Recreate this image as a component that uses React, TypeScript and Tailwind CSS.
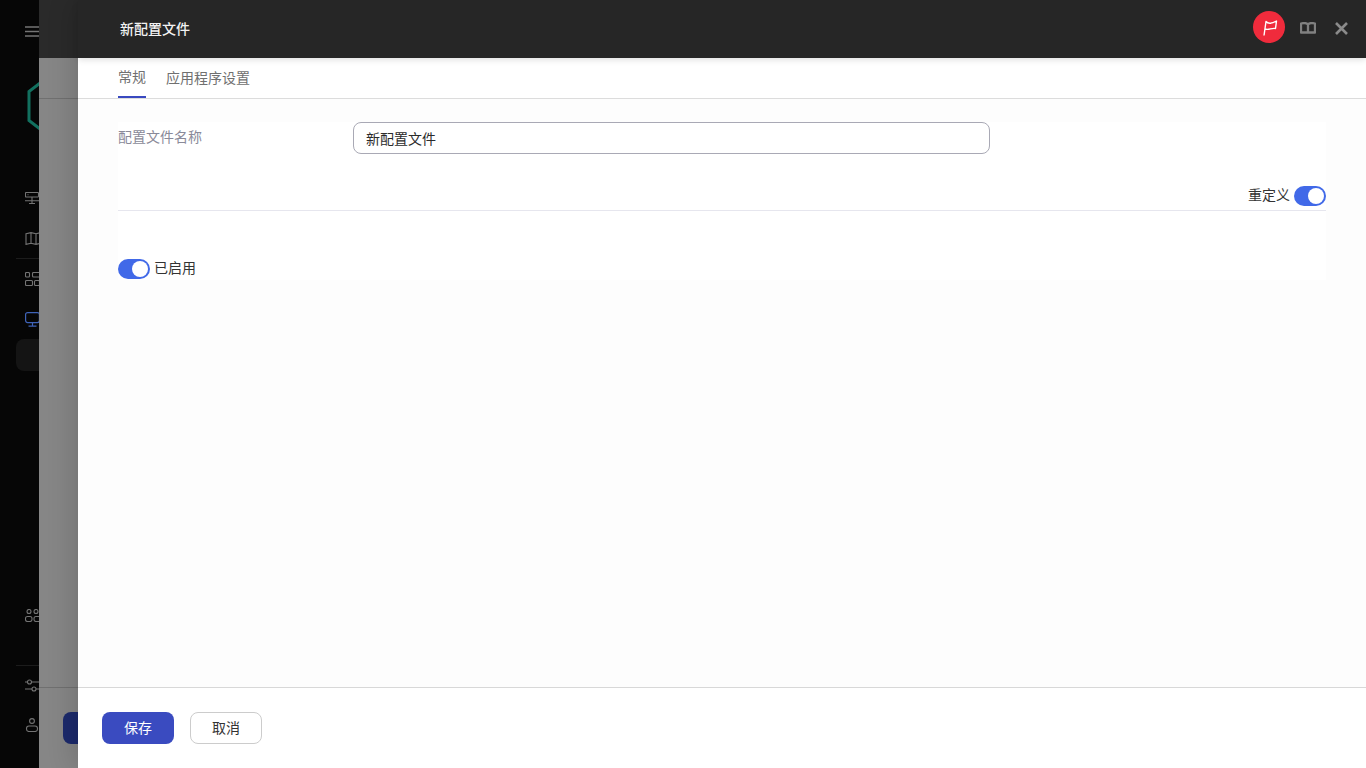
function Toggle() {
  return (
    <span className="flex h-5 w-8 shrink-0 items-center justify-end rounded-full bg-[#4169e8] pr-0.5">
      <span className="h-4 w-4 rounded-full bg-white" />
    </span>
  );
}

function Sidebar() {
  return (
    <div className="flex h-full w-[200px] flex-col bg-[#060606] pl-[25px] text-[#747474]">
      <svg width="18" height="16" viewBox="0 0 18 16" fill="none" stroke="currentColor" strokeWidth="1.3" className="mt-[24px] shrink-0">
        <path d="M0 3H18M0 7.5H18M0 12H18" />
      </svg>
      <svg width="30" height="54" viewBox="0 0 30 54" fill="none" stroke="#12705f" strokeWidth="3" className="mt-[40px] shrink-0">
        <path d="M19 0 L4 11.5 V40.5 L19 52" />
      </svg>
      <svg width="16" height="12" viewBox="0 0 16 12" fill="none" stroke="currentColor" strokeWidth="1.1" className="mt-[58px] shrink-0">
        <rect x="0.5" y="0.5" width="13" height="4.5" rx="0.8" />
        <path d="M2.5 2.7H3.5M7 5V11.5M0 8.8H15M4 11.5H10" />
      </svg>
      <svg width="16" height="13" viewBox="0 0 16 13" fill="none" stroke="currentColor" strokeWidth="1.1" className="mt-[28px] shrink-0">
        <path d="M1 1.8 L6 0.6 L11 1.8 L15.5 0.6 V11.2 L11 12.4 L6 11.2 L1 12.4 Z M6 0.6 V11.2 M11 1.8 V12.4" />
      </svg>
      <div className="-ml-[9px] mt-[13px] h-px w-[160px] shrink-0 bg-[#1c1c1c]" />
      <svg width="16" height="14" viewBox="0 0 16 14" fill="none" stroke="currentColor" strokeWidth="1.1" className="mt-[13px] shrink-0">
        <rect x="0.5" y="0.5" width="4" height="4.5" rx="1" />
        <rect x="7.5" y="0.5" width="8" height="4.5" rx="1" />
        <rect x="0.5" y="8.5" width="7" height="5" rx="1" />
        <rect x="9.5" y="8.5" width="5" height="5" rx="1" />
      </svg>
      <svg width="16" height="15" viewBox="0 0 16 15" fill="none" stroke="#3f63b8" strokeWidth="1.2" className="mt-[26px] shrink-0">
        <rect x="0.6" y="0.6" width="13.8" height="10" rx="2" />
        <path d="M7.5 10.6V14M3.5 14.2H11.5" />
      </svg>
      <div className="-ml-[9px] mt-[12px] h-8 w-[160px] shrink-0 rounded-lg bg-[#141414]" />
      <svg width="16" height="13" viewBox="0 0 16 13" fill="none" stroke="currentColor" strokeWidth="1.1" className="mt-[238px] shrink-0">
        <circle cx="4" cy="2.5" r="2" />
        <circle cx="11" cy="2.5" r="2" />
        <rect x="0.5" y="7.5" width="6.5" height="5" rx="2" />
        <rect x="9" y="7.5" width="6.5" height="5" rx="2" />
      </svg>
      <div className="-ml-[9px] mt-[43px] h-px w-[160px] shrink-0 bg-[#1c1c1c]" />
      <svg width="16" height="14" viewBox="0 0 16 14" fill="none" stroke="currentColor" strokeWidth="1.1" className="mt-[13px] shrink-0">
        <circle cx="4.5" cy="3" r="2" />
        <circle cx="9" cy="10" r="2" />
        <path d="M0 3H2.5M6.5 3H16M0 10H7M11 10H16" />
      </svg>
      <svg width="16" height="14" viewBox="0 0 16 14" fill="none" stroke="currentColor" strokeWidth="1.1" className="mt-[25px] shrink-0">
        <circle cx="7" cy="3" r="2.4" />
        <rect x="1.5" y="8" width="11" height="5.5" rx="2.5" />
      </svg>
    </div>
  );
}

function BackDrawer() {
  return (
    <div className="absolute inset-y-0 left-[39px] right-0 flex flex-col bg-[#868686]">
      <div className="h-[58px] shrink-0 bg-[#2a2a2a]" />
      <div className="h-[41px] shrink-0 border-b border-[#707070]" />
      <div className="flex-1" />
      <div className="h-[81px] shrink-0 border-t border-[#707070] pl-6 pt-6">
        <div className="h-8 w-[72px] rounded-lg bg-[#1c2a6c]" />
      </div>
    </div>
  );
}

function FrontDrawer() {
  return (
    <div className="absolute inset-y-0 left-[78px] right-0 flex flex-col bg-[#fdfdfd] shadow-[-6px_0_24px_rgba(0,0,0,0.14)]">
      <header className="relative z-10 flex h-[58px] shrink-0 items-center bg-[#262626] pl-[42px] pr-[18px] shadow-[0_2px_6px_rgba(0,0,0,0.12)]">
        <h1 className="flex-1 pb-0.5 text-sm font-medium text-[#f2f2f2]">新配置文件</h1>
        <span className="-mt-1 flex h-8 w-8 items-center justify-center rounded-full bg-[#f02b3c]">
          <svg width="32" height="32" viewBox="0 0 32 32" fill="none" stroke="white" strokeWidth="1.4" strokeLinejoin="round">
            <path d="M11 24.5 L13 10.5 C15 13 19 12.5 23.5 10 L22.5 17.5 C19 16.5 15.5 19.5 12 18" />
          </svg>
        </span>
        <svg width="16" height="12" viewBox="0 0 16 12" fill="none" stroke="#808080" strokeWidth="2.3" strokeLinejoin="round" className="mb-0.5 ml-[15px]">
          <path d="M1 1.5 C3 1 6.5 0.8 8 2.5 C9.5 0.8 13 1 15 1.5 V10.5 H1 Z M8 2.5 V10.5" />
        </svg>
        <svg width="13" height="13" viewBox="0 0 13 13" fill="none" stroke="#8a8a8a" strokeWidth="2.6" className="mb-0.5 ml-[19px]">
          <path d="M1 1 L12 12 M12 1 L1 12" />
        </svg>
      </header>
      <nav className="flex h-[41px] shrink-0 items-end gap-5 border-b border-[#dcdcdc] bg-white pl-10 text-sm text-[#707070]">
        <span className="flex h-[39px] items-center border-b-2 border-[#3949c0] pb-[3px]">常规</span>
        <span className="flex h-[39px] items-center pb-[3px]">应用程序设置</span>
      </nav>
      <main className="flex-1 px-10 pt-[23px]">
        <div className="h-[158px] bg-white">
          <div className="flex h-[64px] items-start text-sm">
            <label className="w-[235px] pt-1 text-[#8a8a99]">配置文件名称</label>
            <div className="flex h-8 w-[637px] items-center rounded-lg border border-[#a9a9b5] bg-white pb-px pl-3 text-[#2b2b2b]">新配置文件</div>
          </div>
          <div className="flex h-[25px] items-center justify-end gap-1 border-b border-[#e6e6ee] pb-1 text-sm text-[#333333]">
            <span className="-mt-1">重定义</span>
            <Toggle />
          </div>
          <div className="mt-[48px] flex items-center gap-1 text-sm text-[#333333]">
            <Toggle />
            <span className="-mt-1">已启用</span>
          </div>
        </div>
      </main>
      <footer className="flex h-[81px] shrink-0 items-start gap-4 border-t border-[#d8d8d8] bg-white pl-6 pt-6 text-sm">
        <button className="h-8 w-[72px] rounded-lg bg-[#3a4bc0] pb-0.5 text-white">保存</button>
        <button className="h-8 w-[72px] rounded-lg border border-[#cccccc] bg-white pb-0.5 text-[#333333]">取消</button>
      </footer>
    </div>
  );
}

export default function App() {
  return (
    <div className="relative h-[768px] w-[1366px] overflow-hidden font-['Noto_Sans_CJK_SC','Noto_Sans',sans-serif]">
      <Sidebar />
      <BackDrawer />
      <FrontDrawer />
    </div>
  );
}
